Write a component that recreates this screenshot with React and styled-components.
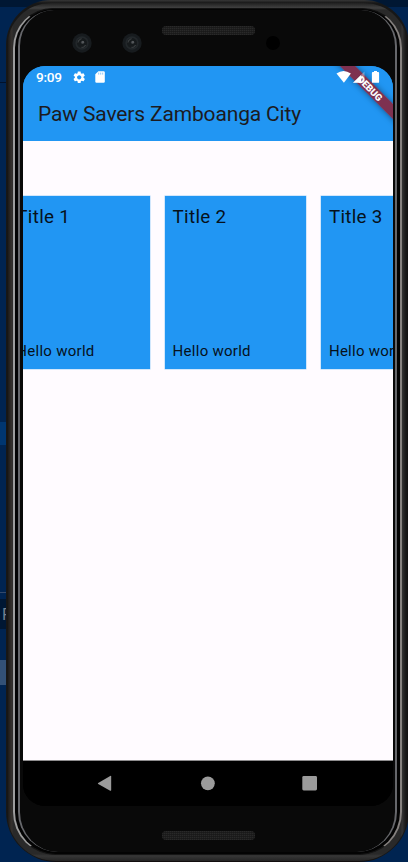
import React from "react";
import styled, { createGlobalStyle } from "styled-components";

const Global = createGlobalStyle`
  *, *::before, *::after { box-sizing: border-box; }
  body { margin: 0; overflow: hidden; font-family: Roboto, "Liberation Sans", sans-serif; }
`;

const Desktop = styled.div`
  display: grid;
  width: 408px;
  height: 862px;
  overflow: hidden;
  background: #002451;
  & > * { grid-area: 1 / 1; }
`;

const Editor = styled.div`
  display: flex;
  flex-direction: column;
`;

const Strip = styled.div`
  flex: none;
  height: ${(p) => p.$h}px;
  background: ${(p) => p.$color || "transparent"};
  color: #75818f;
  font-size: 16px;
  line-height: 31px;
  padding-left: 2px;
`;

const Phone = styled.div`
  width: 403px;
  height: 862px;
  margin-left: 6px;
  padding: 3px 0 1px;
  border-radius: 45px 45px 50px 50px;
  background: linear-gradient(#373737, #171717 3px, #171717 858px, #100c0d);
  overflow: hidden;
`;

const Band = styled.div`
  height: 858px;
  margin: 0 1px;
  padding: 5px 6px 6px;
  border-radius: 44px 44px 49px 49px;
  background:
    linear-gradient(#202020, #414141 5px, transparent 7px, transparent 851px, #363636 853px, #242424),
    linear-gradient(90deg, #141310, #24211f 2px, #36322e 5px, #292929 6px, #292929 394px, #353535 395px, #1d1d1d 398px, #101010);
`;

const Rim = styled.div`
  height: 847px;
  padding: 1px 3px 0 3px;
  border: solid;
  border-width: 1px 2px 1px 2px;
  border-color: #111 #85817f #151515 #9c9c9c;
  border-radius: 40px 40px 43px 43px;
  background: #030303;
`;

const Glass = styled.div`
  height: 842px;
  padding-left: 3px;
  border: solid;
  border-width: 0 2px;
  border-color: #77777b #66676b;
  border-radius: 36px 36px 40px 40px;
  background: #090909;
  display: flex;
  flex-direction: column;
`;

const TopBezel = styled.div`
  width: 370px;
  height: 56px;
  flex: none;
  padding-left: 49px;
  display: grid;
  grid-template-columns: 50px 40px 104px 14px;
  align-items: start;
`;

const Camera = styled.svg`
  width: 20px;
  height: 20px;
  margin-top: 23px;
`;

const Speaker = styled.div`
  width: 93px;
  height: 9px;
  margin-top: ${(p) => p.$top}px;
  margin-left: ${(p) => p.$left || 0}px;
  flex: none;
  border-radius: 4px;
  background:
    repeating-linear-gradient(90deg, transparent 0 1px, #16161688 1px 2px),
    repeating-linear-gradient(#292929 0 1px, #1c1c1c 1px 2px);
`;

const Sensor = styled.div`
  width: 14px;
  height: 14px;
  margin-top: 26px;
  border-radius: 50%;
  background: #000;
`;

const Screen = styled.div`
  position: relative;
  flex: none;
  width: 370px;
  height: 740px;
  border-radius: 22px;
  overflow: hidden;
  background: linear-gradient(#2196f3 50px, #fffbff 50px 700px, #000 700px);
  display: flex;
  flex-direction: column;
`;

const AppHeader = styled.header`
  flex: none;
  height: 75px;
  background: #2196f3;
`;

const StatusBar = styled.div`
  position: relative;
  z-index: 1;
  display: flex;
  align-items: center;
  height: 23px;
  padding: 0 13px;
  color: #fff;
`;

const Clock = styled.span`
  width: 37px;
  font-size: 13.6px;
  font-weight: 500;
  line-height: 23px;
  letter-spacing: -0.25px;
`;

const StatusIcons = styled.svg`
  height: 23px;
  width: ${(p) => p.$w}px;
  margin-left: ${(p) => p.$left || 0};
`;

const AppTitle = styled.h1`
  margin: 0;
  padding: 0 15px;
  color: #1c1b1f;
  font-size: 21px;
  font-weight: 400;
  line-height: 51px;
  letter-spacing: -0.15px;
  white-space: nowrap;
`;

const DebugBanner = styled.div`
  position: absolute;
  left: 292px;
  top: 16.9px;
  width: 110px;
  height: 11.3px;
  transform: rotate(45deg);
  background: rgba(142, 32, 50, 0.85);
  box-shadow: 0 0 6px rgba(0, 0, 0, 0.45);
  color: #fff;
  font-size: 9.6px;
  font-weight: 900;
  line-height: 11.5px;
  text-align: center;
`;

const Carousel = styled.main`
  flex: 1;
  display: flex;
  align-items: flex-start;
  gap: 15px;
  padding-top: 55px;
  margin-left: -14.2px;
`;

const Card = styled.article`
  flex: none;
  width: 141.3px;
  height: 173px;
  padding: 7px 7.5px;
  display: flex;
  flex-direction: column;
  justify-content: space-between;
  background: #2196f3;
  box-shadow: 0 0 0 0.5px #a6d3fa;
  color: #06111b;
  white-space: nowrap;
`;

const CardTitle = styled.h2`
  margin: 0;
  font-size: 18.8px;
  font-weight: 400;
  line-height: 28px;
  letter-spacing: 0.3px;
`;

const CardText = styled.p`
  margin: 0;
  font-size: 15px;
  line-height: 22px;
  letter-spacing: 0.27px;
`;

const NavBar = styled.nav`
  flex: none;
  height: 46px;
  border-top: 1px solid #8e8c8e;
  background: #000;
`;

const NavIcons = styled.svg`
  display: block;
  width: 370px;
  height: 45px;
  fill: #9b9b9b;
`;

function Lens() {
  return (
    <Camera viewBox="0 0 20 20">
      <circle cx="10" cy="10" r="9.7" fill="#171b1e" />
      <circle cx="10" cy="10" r="6.7" fill="#22272a" />
      <circle cx="10" cy="10" r="5" fill="#161a1c" />
      <path d="M6 9.5c.3-2 1.8-3.4 3.5-3.7M13.5 12c-.8 1.8-2.4 2.6-4 2.3" fill="none" stroke="#45494b" strokeWidth="1" />
      <circle cx="10.6" cy="9.3" r="1.6" fill="#404447" />
      <circle cx="11" cy="9" r=".7" fill="#777b7e" />
    </Camera>
  );
}

const gearPath =
  "M19.14 12.94c.04-.3.06-.61.06-.94 0-.32-.02-.64-.07-.94l2.03-1.58c.18-.14.23-.41.12-.61l-1.92-3.32c-.12-.22-.37-.29-.59-.22l-2.39.96c-.5-.38-1.03-.7-1.62-.94l-.36-2.54c-.04-.24-.24-.41-.48-.41h-3.84c-.24 0-.43.17-.47.41l-.36 2.54c-.59.24-1.13.57-1.62.94l-2.39-.96c-.22-.08-.47 0-.59.22L2.74 8.87c-.12.21-.08.47.12.61l2.03 1.58c-.05.3-.09.63-.09.94s.02.64.07.94l-2.03 1.58c-.18.14-.23.41-.12.61l1.92 3.32c.12.22.37.29.59.22l2.39-.96c.5.38 1.03.7 1.62.94l.36 2.54c.05.24.24.41.48.41h3.84c.24 0 .44-.17.47-.41l.36-2.54c.59-.24 1.13-.56 1.62-.94l2.39.96c.22.08.47 0 .59-.22l1.92-3.32c.12-.22.07-.47-.12-.61l-2.01-1.58zM12 15.6c-1.98 0-3.6-1.62-3.6-3.6s1.62-3.6 3.6-3.6 3.6 1.62 3.6 3.6-1.62 3.6-3.6 3.6z";

export default function App() {
  return (
    <>
      <Global />
      <Desktop>
        <Editor>
          <Strip $h={7} $color="#001733" />
          <Strip $h={75} />
          <Strip $h={1} $color="#00112b" />
          <Strip $h={339} />
          <Strip $h={23} $color="#003670" />
          <Strip $h={147} />
          <Strip $h={1} $color="#33496b" />
          <Strip $h={6} />
          <Strip $h={30} $color="#001733">F</Strip>
          <Strip $h={31} />
          <Strip $h={25} $color="#335176" />
        </Editor>
        <Phone>
          <Band>
            <Rim>
              <Glass>
                <TopBezel>
                  <Lens />
                  <Lens />
                  <Speaker $top={16} />
                  <Sensor />
                </TopBezel>
                <Screen>
                  <AppHeader>
                    <StatusBar>
                      <Clock>9:09</Clock>
                      <StatusIcons $w={33} viewBox="0 0 33 23" fill="#fff">
                        <path transform="translate(-1 4.1) scale(.6)" d={gearPath} />
                        <path d="M25.4 5.2h5.2q1.2 0 1.2 1.2v9.2q0 1.2-1.2 1.2h-7.1q-1.2 0-1.2-1.2V8.3z" />
                        <path d="M25.7 6.6v2M27.7 6.6v2M29.7 6.6v2" stroke="#70bcf7" strokeWidth=".8" />
                      </StatusIcons>
                      <StatusIcons $w={46} $left="auto" viewBox="0 0 46 23" fill="#fff">
                        <path d="M2.5 7.6q6.9-5.4 14.4 0L9.9 16.7z" />
                        <path d="M30.5 5.6v11.2H19z" opacity=".35" />
                        <path d="M27 9v7.8h-8z" />
                        <path d="M40 5h3v1h1.2q.9 0 .9.9v9q0 .9-.9.9h-5.4q-.9 0-.9-.9v-9q0-.9.9-.9H40z" />
                      </StatusIcons>
                    </StatusBar>
                    <AppTitle>Paw Savers Zamboanga City</AppTitle>
                  </AppHeader>
                  <Carousel>
                    {[1, 2, 3].map((n) => (
                      <Card key={n}>
                        <CardTitle>Title {n}</CardTitle>
                        <CardText>Hello world</CardText>
                      </Card>
                    ))}
                  </Carousel>
                  <NavBar>
                    <NavIcons viewBox="0 0 370 45">
                      <path d="M75.2 21.9q-.8.5 0 1l12 6.8q1 .5 1-.6V15.6q0-1.1-1-.6z" />
                      <circle cx="184.9" cy="22.3" r="6.9" />
                      <rect x="279.3" y="15" width="14.7" height="14.5" rx="1.4" />
                    </NavIcons>
                  </NavBar>
                  <DebugBanner>DEBUG</DebugBanner>
                </Screen>
                <Speaker $top={25} $left={139} />
              </Glass>
            </Rim>
          </Band>
        </Phone>
      </Desktop>
    </>
  );
}
